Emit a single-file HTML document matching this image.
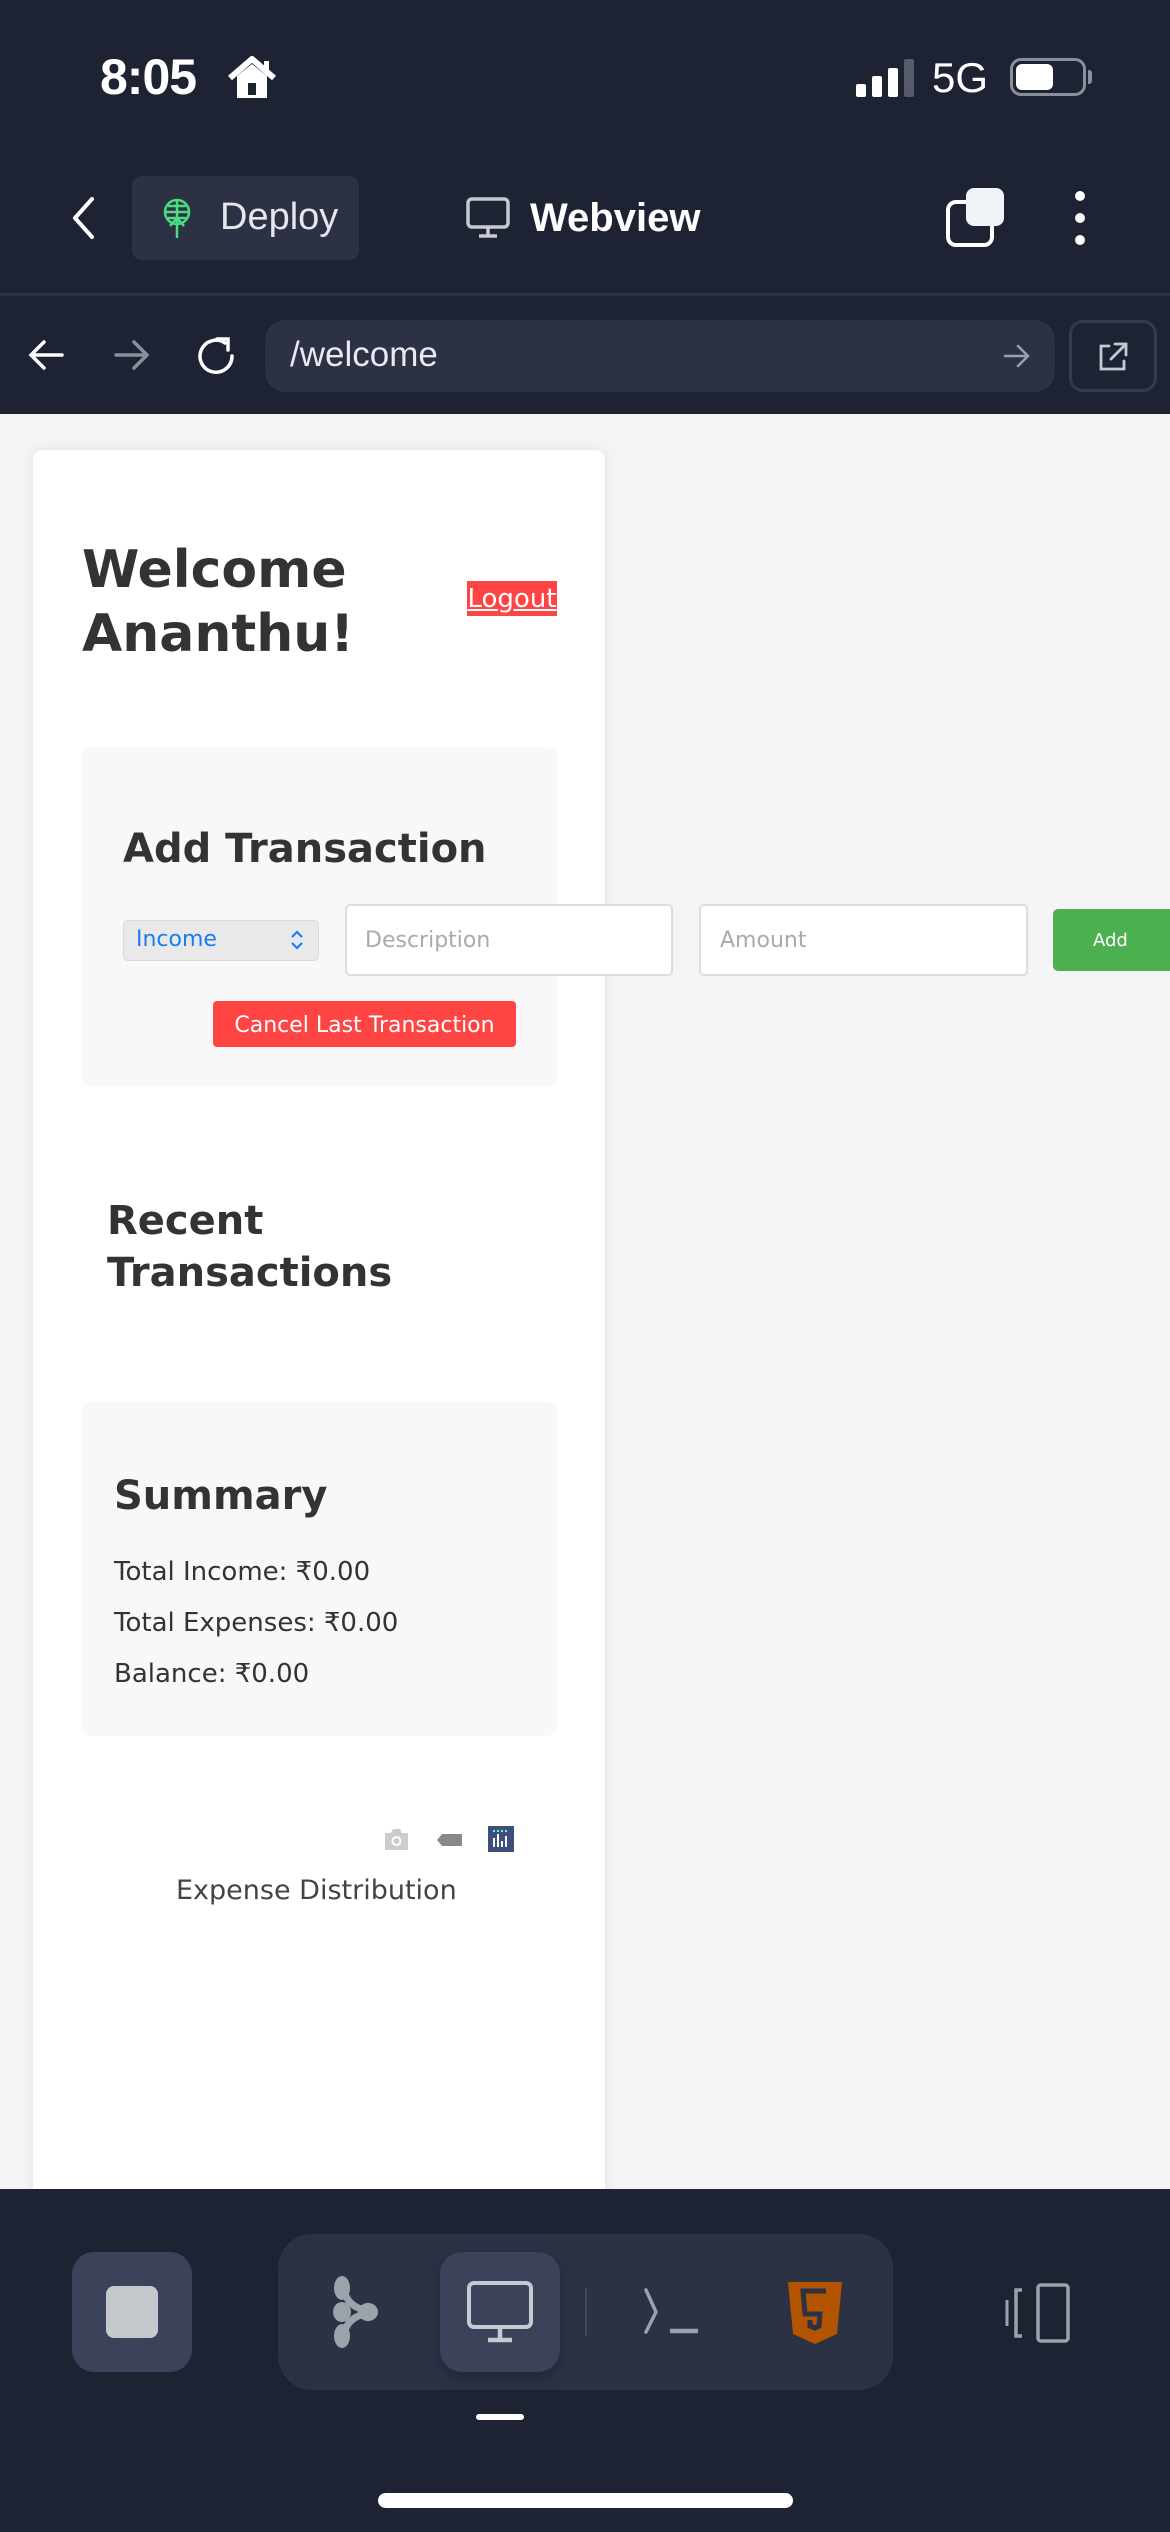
<!DOCTYPE html>
<html><head><meta charset="utf-8"><style>
*{margin:0;padding:0;box-sizing:border-box}
body{width:1170px;height:2532px;position:relative;overflow:hidden;background:#1e2334;font-family:"Liberation Sans",sans-serif}
.a{position:absolute}
.w{font-family:"DejaVu Sans","Liberation Sans",sans-serif;color:#333}
</style></head><body>
<!-- status bar -->
<div class="a" style="left:100px;top:48px;font-size:50px;font-weight:bold;color:#fff;letter-spacing:-1px">8:05</div>
<svg class="a" style="left:226px;top:56px" width="52" height="44" viewBox="0 0 52 44"><path d="M4 22 L26 3 L48 22" stroke="#fff" stroke-width="6" fill="none" stroke-linejoin="round"/><path d="M11 20 V42 H41 V20 L26 8Z" fill="#fff"/><rect x="22" y="27" width="8" height="12" fill="#1e2334"/><rect x="38" y="5" width="5" height="12" fill="#fff"/></svg>
<div class="a" style="left:856px;top:84px;width:10px;height:13px;background:#fff;border-radius:2px"></div>
<div class="a" style="left:872px;top:76px;width:10px;height:21px;background:#fff;border-radius:2px"></div>
<div class="a" style="left:888px;top:68px;width:10px;height:29px;background:#fff;border-radius:2px"></div>
<div class="a" style="left:904px;top:59px;width:10px;height:38px;background:#555b6b;border-radius:2px"></div>
<div class="a" style="left:932px;top:54px;font-size:42px;color:#fff">5G</div>
<div class="a" style="left:1010px;top:58px;width:76px;height:38px;border:3px solid #8a8f9a;border-radius:11px"></div>
<div class="a" style="left:1016px;top:64px;width:37px;height:26px;background:#fff;border-radius:6px"></div>
<div class="a" style="left:1088px;top:70px;width:4px;height:14px;background:#8a8f9a;border-radius:0 3px 3px 0"></div>
<!-- header -->
<svg class="a" style="left:68px;top:196px" width="30" height="44"><path d="M24 3 L7 22 L24 41" stroke="#fff" stroke-width="4" fill="none" stroke-linecap="round" stroke-linejoin="round"/></svg>
<div class="a" style="left:132px;top:176px;width:227px;height:84px;background:#2c3144;border-radius:10px"></div>
<svg class="a" style="left:160px;top:198px" width="34" height="42" viewBox="0 0 34 42"><circle cx="17" cy="14" r="12" stroke="#4ade80" stroke-width="2.5" fill="none"/><path d="M5 14 H29 M17 2 V40 M10 28 L17 20 L24 28 M8 8 H26 M8 20 H26" stroke="#4ade80" stroke-width="2.5" fill="none"/></svg>
<div class="a" style="left:220px;top:196px;font-size:38px;color:#e4e7ee">Deploy</div>
<svg class="a" style="left:465px;top:196px" width="46" height="44"><rect x="3" y="3" width="40" height="28" rx="4" stroke="#c5c9d0" stroke-width="3.5" fill="none"/><path d="M23 31 V39 M14 40 H32" stroke="#c5c9d0" stroke-width="3.5"/></svg>
<div class="a" style="left:530px;top:196px;font-size:40px;font-weight:bold;color:#fff">Webview</div>
<div class="a" style="left:946px;top:200px;width:48px;height:47px;border:4px solid #fff;border-radius:10px"></div>
<div class="a" style="left:966px;top:188px;width:38px;height:38px;background:#f0f4f8;border-radius:8px"></div>
<div class="a" style="left:1075px;top:191px;width:10px;height:10px;border-radius:5px;background:#fff"></div>
<div class="a" style="left:1075px;top:213px;width:10px;height:10px;border-radius:5px;background:#fff"></div>
<div class="a" style="left:1075px;top:235px;width:10px;height:10px;border-radius:5px;background:#fff"></div>
<div class="a" style="left:0;top:293px;width:1170px;height:3px;background:#2e3447"></div>
<!-- url row -->
<svg class="a" style="left:28px;top:338px" width="36" height="34"><path d="M34 17 H4 M16 4 L3 17 L16 30" stroke="#fff" stroke-width="3.5" fill="none" stroke-linecap="round"/></svg>
<svg class="a" style="left:114px;top:338px" width="36" height="34"><path d="M2 17 H32 M20 4 L33 17 L20 30" stroke="#8a8f9a" stroke-width="3.5" fill="none" stroke-linecap="round"/></svg>
<svg class="a" style="left:194px;top:334px" width="46" height="44"><path d="M38 22 A16 16 0 1 1 31 9" stroke="#fff" stroke-width="3.5" fill="none" stroke-linecap="round"/><path d="M23 5 H34 V16" stroke="#fff" stroke-width="3.5" fill="none" stroke-linecap="round"/></svg>
<div class="a" style="left:265px;top:320px;width:790px;height:72px;background:#2c3144;border-radius:20px"></div>
<div class="a" style="left:290px;top:335px;font-size:35px;color:#e8eaf0">/welcome</div>
<svg class="a" style="left:1003px;top:342px" width="28" height="28"><path d="M2 14 H25 M15 4 L25 14 L15 24" stroke="#9aa0ac" stroke-width="2.5" fill="none" stroke-linecap="round"/></svg>
<div class="a" style="left:1069px;top:320px;width:88px;height:72px;border:3px solid #353b4f;border-radius:14px"></div>
<svg class="a" style="left:1096px;top:340px" width="34" height="34"><path d="M13 6 H5 V29 H28 V21 M19 4 H30 V15 M30 4 L15 19" stroke="#c5c9d0" stroke-width="2.8" fill="none" stroke-linecap="round"/></svg>
<!-- web content -->
<div class="a" style="left:0;top:414px;width:1170px;height:1776px;background:#f4f4f4"></div>
<div class="a" style="left:33px;top:450px;width:572px;height:1760px;background:#fff;border-radius:10px;box-shadow:0 0 12px rgba(0,0,0,.08)"></div>
<div class="a w" style="left:82px;top:538px;font-size:52px;font-weight:bold;line-height:64px">Welcome<br>Ananthu!</div>
<div class="a w" style="left:467px;top:581px;width:90px;height:35px;background:#ff4444;color:#fff;font-size:26px;text-decoration:underline;line-height:36px;text-align:center">Logout</div>
<div class="a" style="left:81px;top:747px;width:476px;height:339px;background:#f8f8f8;border-radius:10px"></div>
<div class="a w" style="left:123px;top:826px;font-size:40px;font-weight:bold">Add Transaction</div>
<div class="a" style="left:123px;top:920px;width:196px;height:41px;background:#e9e9e9;border:1px solid #d8d8d8;border-radius:5px"></div>
<div class="a w" style="left:136px;top:927px;font-size:22px;color:#1a7cf5">Income</div>
<svg class="a" style="left:290px;top:928px" width="14" height="24"><path d="M2 9 L7 4 L12 9 M2 15 L7 20 L12 15" stroke="#1a7cf5" stroke-width="2.2" fill="none"/></svg>
<div class="a" style="left:345px;top:904px;width:328px;height:72px;background:#fff;border:2px solid #ddd;border-radius:5px"></div>
<div class="a w" style="left:365px;top:928px;font-size:22px;color:#aaa">Description</div>
<div class="a" style="left:699px;top:904px;width:329px;height:72px;background:#fff;border:2px solid #ddd;border-radius:5px"></div>
<div class="a w" style="left:720px;top:928px;font-size:22px;color:#aaa">Amount</div>
<div class="a w" style="left:1053px;top:909px;width:130px;height:62px;background:#4caf50;border-radius:5px;color:#fff;font-size:18px;line-height:64px;padding-left:40px">Add</div>
<div class="a w" style="left:213px;top:1001px;width:303px;height:46px;background:#ff4444;border-radius:4px;color:#fff;font-size:22px;line-height:49px;text-align:center">Cancel Last Transaction</div>
<div class="a w" style="left:107px;top:1195px;font-size:40px;font-weight:bold;line-height:52px">Recent<br>Transactions</div>
<div class="a" style="left:81px;top:1402px;width:476px;height:334px;background:#f8f8f8;border-radius:10px"></div>
<div class="a w" style="left:114px;top:1473px;font-size:40px;font-weight:bold">Summary</div>
<div class="a w" style="left:114px;top:1547px;font-size:26px;line-height:51px">Total Income: ₹0.00<br>Total Expenses: ₹0.00<br>Balance: ₹0.00</div>
<svg class="a" style="left:383px;top:1828px" width="27" height="24"><path d="M8 5 L10 1 H17 L19 5 H25 V22 H2 V5Z" fill="#ccc"/><circle cx="13.5" cy="13" r="5" fill="#fff"/><circle cx="13.5" cy="13" r="3" fill="#ccc"/></svg>
<svg class="a" style="left:436px;top:1831px" width="27" height="18"><path d="M6 3 H26 V15 H6 L1 9Z" fill="#888"/></svg>
<svg class="a" style="left:488px;top:1826px" width="26" height="26"><rect width="26" height="26" fill="#3d4f7a"/><path d="M6 12 V21 M10 8 V21 M14 15 V21 M18 10 V21" stroke="#fff" stroke-width="2"/><path d="M5 5 H21" stroke="#5fd" stroke-width="2" stroke-dasharray="2 2"/></svg>
<div class="a w" style="left:176px;top:1875px;font-size:27px;color:#444">Expense Distribution</div>
<!-- bottom nav -->
<div class="a" style="left:0;top:2189px;width:1170px;height:343px;background:#1e2334"></div>
<div class="a" style="left:72px;top:2252px;width:120px;height:120px;background:#3b4259;border-radius:22px"></div>
<div class="a" style="left:106px;top:2286px;width:52px;height:52px;background:#c5c9ce;border-radius:8px"></div>
<div class="a" style="left:278px;top:2234px;width:615px;height:156px;background:#2c3144;border-radius:34px"></div>
<svg class="a" style="left:330px;top:2274px" width="52" height="76" viewBox="0 0 52 76"><ellipse cx="12" cy="14" rx="8" ry="12" fill="#9ca2aa"/><ellipse cx="12" cy="38" rx="9" ry="10" fill="#9ca2aa"/><ellipse cx="12" cy="62" rx="8" ry="12" fill="#9ca2aa"/><ellipse cx="38" cy="38" rx="10" ry="9" fill="#9ca2aa"/><path d="M14 18 Q20 34 36 36 M14 58 Q20 42 36 40" stroke="#9ca2aa" stroke-width="7" fill="none"/></svg>
<div class="a" style="left:440px;top:2252px;width:120px;height:120px;background:#3b4259;border-radius:22px;box-shadow:0 6px 14px rgba(0,0,0,.2)"></div>
<svg class="a" style="left:466px;top:2280px" width="68" height="66"><rect x="3" y="3" width="62" height="44" rx="5" stroke="#c5c9d0" stroke-width="4" fill="none"/><path d="M34 47 V58 M22 60 H46" stroke="#c5c9d0" stroke-width="4.5"/></svg>
<div class="a" style="left:585px;top:2288px;width:2px;height:48px;background:#41475a"></div>
<svg class="a" style="left:642px;top:2286px" width="60" height="50"><path d="M4 4 L14 26 L4 46" stroke="#9ca2aa" stroke-width="3.5" fill="none" stroke-linecap="round"/><path d="M28 45 H56" stroke="#9ca2aa" stroke-width="4.5"/></svg>
<svg class="a" style="left:788px;top:2282px" width="54" height="62" viewBox="0 0 54 62"><path d="M0 0 H54 L49 52 L27 62 L5 52Z" fill="#b35400"/><path d="M38 9 H15 L17 32 H32 L31 44 L27 46 L22 44 L22 38" stroke="#2c3144" stroke-width="5" fill="none"/></svg>
<svg class="a" style="left:1002px;top:2282px" width="72" height="62"><path d="M5 18 V44" stroke="#9ca2aa" stroke-width="3"/><path d="M20 8 H14 V54 H20" stroke="#9ca2aa" stroke-width="3.5" fill="none"/><rect x="36" y="3" width="30" height="56" rx="3" stroke="#9ca2aa" stroke-width="3.5" fill="none"/></svg>
<div class="a" style="left:476px;top:2414px;width:48px;height:6px;background:#fff;border-radius:3px"></div>
<div class="a" style="left:378px;top:2493px;width:415px;height:15px;background:#fff;border-radius:8px"></div>
</body></html>
